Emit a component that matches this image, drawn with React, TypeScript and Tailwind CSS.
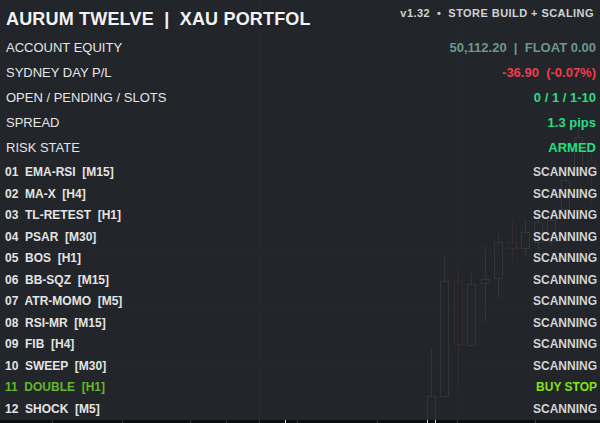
import React from 'react';

type Metric = { label: string; value: string; color: string };
type Strategy = { id: string; name: string; tf: string; status: string; active?: boolean };

const metrics: Metric[] = [
  { label: 'ACCOUNT EQUITY', value: '50,112.20  |  FLOAT 0.00', color: 'text-[#6f9689]' },
  { label: 'SYDNEY DAY P/L', value: '-36.90  (-0.07%)', color: 'text-[#f23b4c]' },
  { label: 'OPEN / PENDING / SLOTS', value: '0 / 1 / 1-10', color: 'text-[#2ddc85]' },
  { label: 'SPREAD', value: '1.3 pips', color: 'text-[#2ddc85]' },
  { label: 'RISK STATE', value: 'ARMED', color: 'text-[#1fe07f]' },
];

const strategies: Strategy[] = [
  { id: '01', name: 'EMA-RSI', tf: 'M15', status: 'SCANNING' },
  { id: '02', name: 'MA-X', tf: 'H4', status: 'SCANNING' },
  { id: '03', name: 'TL-RETEST', tf: 'H1', status: 'SCANNING' },
  { id: '04', name: 'PSAR', tf: 'M30', status: 'SCANNING' },
  { id: '05', name: 'BOS', tf: 'H1', status: 'SCANNING' },
  { id: '06', name: 'BB-SQZ', tf: 'M15', status: 'SCANNING' },
  { id: '07', name: 'ATR-MOMO', tf: 'M5', status: 'SCANNING' },
  { id: '08', name: 'RSI-MR', tf: 'M15', status: 'SCANNING' },
  { id: '09', name: 'FIB', tf: 'H4', status: 'SCANNING' },
  { id: '10', name: 'SWEEP', tf: 'M30', status: 'SCANNING' },
  { id: '11', name: 'DOUBLE', tf: 'H1', status: 'BUY STOP', active: true },
  { id: '12', name: 'SHOCK', tf: 'M5', status: 'SCANNING' },
];

// x, wick top, body top, body bottom, wick bottom, bearish
const candles: Array<[number, number, number, number, number, boolean]> = [
  [431, 348, 396, 430, 430, false],
  [444, 256, 281, 397, 397, false],
  [458, 271, 281, 345, 385, true],
  [471, 273, 284, 346, 347, false],
  [485, 246, 279, 284, 322, false],
  [498, 234, 242, 279, 298, false],
  [512, 220, 242, 249, 263, true],
  [525, 220, 232, 249, 256, false],
  [538, 208, 222, 243, 250, false],
  [551, 212, 220, 242, 246, false],
  [565, 170, 180, 210, 216, false],
  [578, 128, 137, 170, 176, false],
  [591, 150, 160, 168, 203, true],
];

function ChartBackdrop() {
  return (
    <svg className="absolute inset-0 pointer-events-none" width="600" height="423" viewBox="0 0 600 423">
      {[259, 457].map((x) => (
        <line key={x} x1={x + 0.5} y1={0} x2={x + 0.5} y2={420} stroke="#25282c" strokeWidth="1" />
      ))}
      {[248, 307, 360].map((y) => (
        <line key={y} x1={0} y1={y + 0.5} x2={600} y2={y + 0.5} stroke="#24272b" strokeWidth="1" />
      ))}
      {candles.map(([x, wt, bt, bb, wb, bear]) => {
        const c = bear ? '#352b2d' : '#313439';
        return (
          <g key={x} stroke={c} strokeWidth="1" fill="none">
            <line x1={x + 0.5} y1={wt} x2={x + 0.5} y2={bt} />
            <line x1={x + 0.5} y1={bb} x2={x + 0.5} y2={wb} />
            <rect x={x - 3.5} y={bt + 0.5} width={8} height={Math.max(bb - bt - 1, 1)} />
          </g>
        );
      })}
    </svg>
  );
}

function TimeAxis() {
  const ticks = [52, 122, 190, 226, 259, 297, 377, 457, 535];
  return (
    <div className="relative h-[3px] bg-[#0b0c0d]">
      {ticks.map((x) => (
        <div key={x} className="absolute top-0 h-[3px] w-px bg-[#34373c]" style={{ left: x }} />
      ))}
      <div className="absolute top-0 h-[3px] w-px bg-[#d8d8d8] left-[285px]" />
      <div className="absolute top-0 h-[3px] w-px bg-[#d8d8d8] left-[427px]" />
      <div className="absolute top-0 h-[3px] w-px bg-[#d8d8d8] left-[435px]" />
    </div>
  );
}

export default function App() {
  return (
    <div className="relative w-[600px] h-[423px] overflow-hidden bg-[#222529] font-['Liberation_Sans',Arial,sans-serif]">
      <ChartBackdrop />
      <div className="relative flex flex-col h-full">
        <div className="flex h-[35px] pt-[2px] pl-[6px] pr-[6px] items-center justify-between">
          <div className="text-[18px] font-bold text-[#f3f3f3] whitespace-pre leading-none tracking-[0.01em]">
            AURUM TWELVE  |  XAU PORTFOL
          </div>
          <div className="self-start mt-[6px] text-[11px] font-bold text-[#cfd3d7] whitespace-pre leading-none tracking-[0.04em]">
            v1.32  •  STORE BUILD + SCALING
          </div>
        </div>

        {metrics.map((m) => (
          <div key={m.label} className="flex h-[25px] items-center justify-between pl-[6px] pr-[4px]">
            <span className="text-[13px] text-[#e6e6e6] leading-none">{m.label}</span>
            <span className={`text-[13px] font-bold whitespace-pre leading-none ${m.color}`}>{m.value}</span>
          </div>
        ))}

        <div className="mt-[1.5px]">
          {strategies.map((s) => (
            <div key={s.id} className="flex h-[21.5px] items-center justify-between pl-[5px] pr-[3px]">
              <span
                className={`text-[12px] font-bold whitespace-pre leading-none ${
                  s.active ? 'text-[#62b82a]' : 'text-[#e4e4e4]'
                }`}
              >
                {`${s.id}  ${s.name}  [${s.tf}]`}
              </span>
              <span
                className={`text-[12px] font-bold leading-none ${
                  s.active ? 'text-[#86e01c]' : 'text-[#d4d4d4]'
                }`}
              >
                {s.status}
              </span>
            </div>
          ))}
        </div>

        <div className="mt-auto">
          <TimeAxis />
        </div>
      </div>
    </div>
  );
}
